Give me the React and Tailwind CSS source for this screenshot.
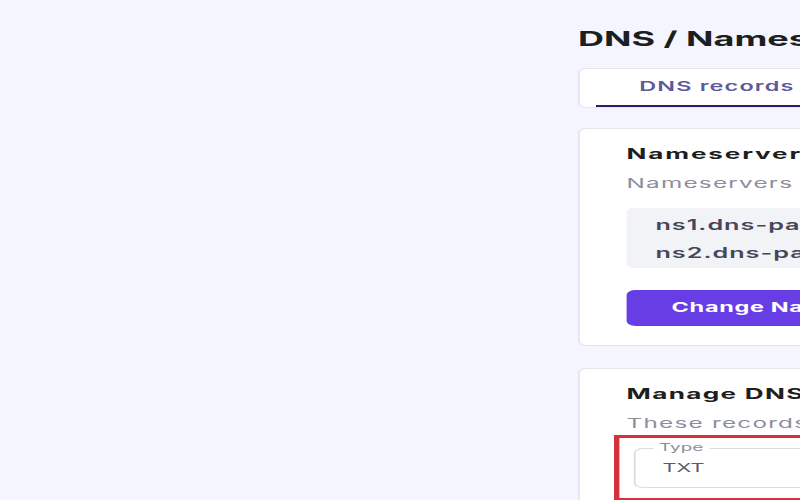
export default function App() {
  return (
    <div
      className="w-[800px] h-[500px] overflow-hidden bg-[#f4f5ff] flex"
      style={{ fontFamily: 'Inter, "Noto Sans", sans-serif' }}
    >
      <div className="w-[578px] shrink-0" />
      <div className="w-[300px] shrink-0 origin-left scale-x-[1.8] pt-[27px]">
        <h1 className="text-[20px] leading-[24px] font-bold text-[#1d1e20] whitespace-nowrap">
          DNS / Nameservers
        </h1>

        <div className="mt-[17px] h-[40px] bg-white border border-[#e5e5ee] rounded-[5px] flex px-[9px]">
          <div className="px-[24px] flex items-center text-[13px] tracking-[0.05em] font-semibold text-[#5c5a9c] border-b-2 border-[#2f1c6a] whitespace-nowrap">
            DNS records
          </div>
          <div className="px-[24px] flex items-center text-[13px] tracking-[0.05em] font-semibold text-[#727586] whitespace-nowrap">
            Nameservers
          </div>
        </div>

        <div className="mt-[20px] bg-white border border-[#e5e5ee] rounded-[5px] pt-[16px] pb-[19px] px-[26px]">
          <h2 className="text-[14.5px] tracking-[0.07em] leading-[18px] font-bold text-[#1d1e20] whitespace-nowrap">
            Nameservers
          </h2>
          <p className="mt-[11px] text-[13.5px] tracking-[0.05em] leading-[18px] text-[#8c8e9c] whitespace-nowrap">
            Nameservers hold your domain's DNS records
          </p>
          <div className="mt-[16px] bg-[#f2f3f6] rounded-[4px] pt-[3px] pb-[1px] px-[16px] text-[14px] tracking-[0.04em] leading-[28px] font-semibold text-[#46465a] whitespace-nowrap">
            <div>ns1.dns-parking.com</div>
            <div>ns2.dns-parking.com</div>
          </div>
          <button className="mt-[22px] h-[36px] px-[25px] bg-[#673de6] rounded-[5px] text-white text-[13px] tracking-[0.03em] font-bold whitespace-nowrap">
            Change Nameservers
          </button>
        </div>

        <div className="mt-[22px] bg-white border border-[#e5e5ee] rounded-[5px] pt-[16px] pb-[19px] px-[26px]">
          <h2 className="text-[14.5px] tracking-[0.05em] leading-[18px] font-bold text-[#1d1e20] whitespace-nowrap">
            Manage DNS records
          </h2>
          <p className="mt-[11px] text-[13.5px] tracking-[0.05em] leading-[18px] text-[#8c8e9c] whitespace-nowrap">
            These records define how your domain behaves
          </p>
          <div className="mt-[3px] -mx-[7px] border-[3px] border-[#d6303d] px-[8px] pt-[10px] pb-[10px]">
            <div className="relative h-[40px] border border-[#dadce3] rounded-[5px] flex items-center px-[15px] text-[12px] text-[#5a5b68]">
              <span className="absolute -top-[8px] left-[10px] px-[3px] bg-white text-[10.5px] leading-[14px] text-[#8c8e9c]">
                Type
              </span>
              TXT
            </div>
          </div>
        </div>
      </div>
    </div>
  );
}
